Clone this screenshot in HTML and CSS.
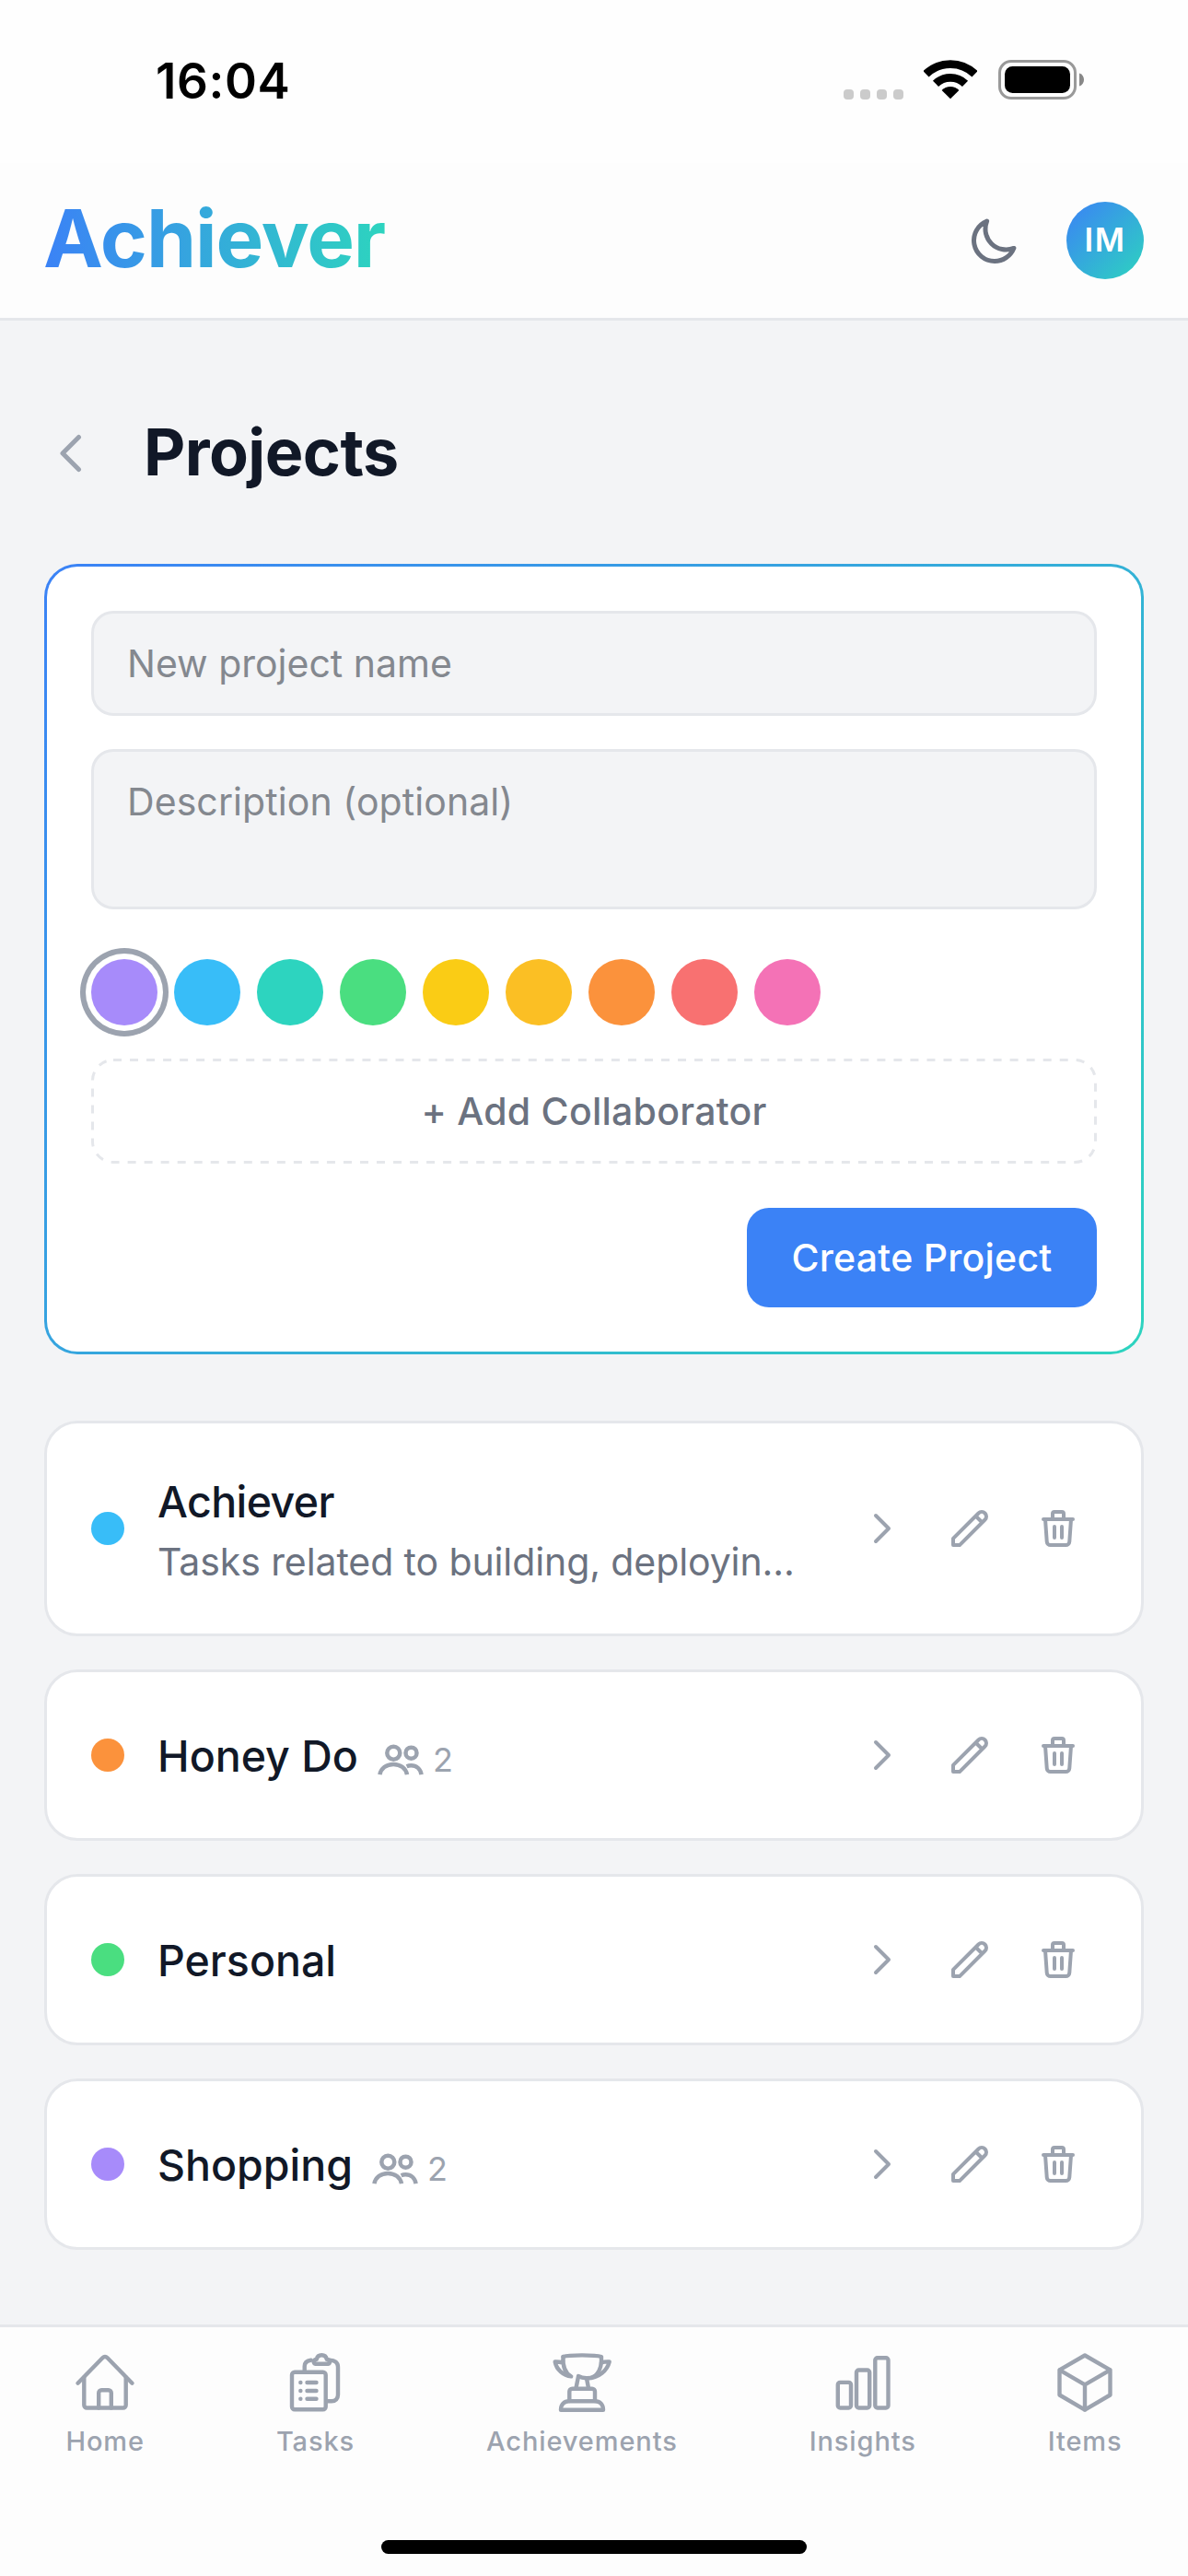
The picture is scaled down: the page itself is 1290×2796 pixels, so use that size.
FILE: index.html
```html
<!DOCTYPE html>
<html lang="en">
<head>
    <meta charset="UTF-8">
    <meta name="viewport" content="width=device-width, initial-scale=1.0">
    <title>Achiever - Projects</title>
    <link rel="stylesheet" href="styles.css">
</head>
<body>
    <!-- Shared icons -->
    <svg class="sprite" width="0" height="0">
        <symbol id="chevron" viewBox="0 0 24 24"><path d="M9 5l7 7-7 7"/></symbol>
        <symbol id="pencil" viewBox="0 0 24 24"><path d="M15.232 5.232l3.536 3.536m-2.036-5.036a2.5 2.5 0 113.536 3.536L6.5 21.036H3v-3.572L16.732 3.732z"/></symbol>
        <symbol id="trash" viewBox="0 0 24 24"><path d="M19 7l-.867 12.142A2 2 0 0116.138 21H7.862a2 2 0 01-1.995-1.858L5 7m5 4v6m4-6v6m1-10V4a1 1 0 00-1-1h-4a1 1 0 00-1 1v3M4 7h16"/></symbol>
        <symbol id="people" viewBox="0 0 50 36">
            <circle cx="17.3" cy="10.7" r="7"/>
            <circle cx="36.5" cy="10.7" r="6"/>
            <path d="M2.4 34.2C3.5 27.5 9.5 22.9 17.2 22.9s13.7 4.6 14.8 11.3"/>
            <path d="M31.6 25.2c1.4-.6 3-.9 4.8-.9 5.8 0 10.2 4 11.2 9.9"/>
        </symbol>
    </svg>

    <div class="status-bar">
        <span class="time">16:04</span>
        <div class="status-icons">
            <div class="signal"><i></i><i></i><i></i><i></i></div>
            <svg class="wifi" viewBox="0 0 58 43">
                <path d="M2.5 15.3a38 38 0 0 1 53 0M13 25.8a23 23 0 0 1 32 0" fill="none" stroke="#000" stroke-width="8.8"/>
                <path d="M29 42.3 19.6 32.9a13.3 13.3 0 0 1 18.8 0z"/>
            </svg>
            <svg class="battery" viewBox="0 0 93 43">
                <rect x="1.5" y="1.5" width="82" height="40" rx="12.5" fill="none" stroke="#999" stroke-width="3"/>
                <rect x="7" y="7" width="71" height="29" rx="8.5"/>
                <path d="M88 14.5c3.3 1 5 3.7 5 7s-1.7 6-5 7z" fill="#888"/>
            </svg>
        </div>
    </div>

    <header class="header">
        <div class="logo">Achiever</div>
        <div class="header-actions">
            <svg class="icon moon" viewBox="0 0 24 24"><path d="M20.354 15.354A9 9 0 018.646 3.646 9.003 9.003 0 0012 21a9.003 9.003 0 008.354-5.646z"/></svg>
            <div class="avatar">IM</div>
        </div>
    </header>

    <main class="main">
        <div class="page-title">
            <svg class="icon back" viewBox="0 0 24 24"><path d="M15 19l-7-7 7-7"/></svg>
            <h1>Projects</h1>
        </div>

        <form class="new-project">
            <input type="text" class="field" placeholder="New project name">
            <textarea class="field description" placeholder="Description (optional)"></textarea>
            <div class="swatches">
                <span class="swatch violet selected"></span>
                <span class="swatch sky"></span>
                <span class="swatch teal"></span>
                <span class="swatch green"></span>
                <span class="swatch yellow"></span>
                <span class="swatch amber"></span>
                <span class="swatch orange"></span>
                <span class="swatch red"></span>
                <span class="swatch pink"></span>
            </div>
            <button type="button" class="add-collaborator">
                <svg class="dashes" viewBox="0 0 1092 114"><rect x="1.5" y="1.5" width="1089" height="111" rx="22.5"/></svg>
                + Add Collaborator
            </button>
            <button type="button" class="create">Create Project</button>
        </form>

        <div class="projects">
            <div class="project">
                <span class="dot sky"></span>
                <div class="info">
                    <div class="name name-tight">Achiever</div>
                    <div class="details">Tasks related to building, deployin...</div>
                </div>
                <div class="actions">
                    <svg class="icon"><use href="#chevron"/></svg>
                    <svg class="icon"><use href="#pencil"/></svg>
                    <svg class="icon"><use href="#trash"/></svg>
                </div>
            </div>
            <div class="project">
                <span class="dot orange"></span>
                <div class="info">
                    <div class="name">Honey Do <span class="members"><svg class="people"><use href="#people"/></svg>2</span></div>
                </div>
                <div class="actions">
                    <svg class="icon"><use href="#chevron"/></svg>
                    <svg class="icon"><use href="#pencil"/></svg>
                    <svg class="icon"><use href="#trash"/></svg>
                </div>
            </div>
            <div class="project">
                <span class="dot green"></span>
                <div class="info">
                    <div class="name">Personal</div>
                </div>
                <div class="actions">
                    <svg class="icon"><use href="#chevron"/></svg>
                    <svg class="icon"><use href="#pencil"/></svg>
                    <svg class="icon"><use href="#trash"/></svg>
                </div>
            </div>
            <div class="project">
                <span class="dot violet"></span>
                <div class="info">
                    <div class="name">Shopping <span class="members"><svg class="people"><use href="#people"/></svg>2</span></div>
                </div>
                <div class="actions">
                    <svg class="icon"><use href="#chevron"/></svg>
                    <svg class="icon"><use href="#pencil"/></svg>
                    <svg class="icon"><use href="#trash"/></svg>
                </div>
            </div>
        </div>
    </main>

    <nav class="tabs">
        <div class="tab-row">
            <a class="tab">
                <svg viewBox="0 0 72 72">
                    <path d="M6.5 36.7 33.6 9a3.4 3.4 0 0 1 4.8 0L65.5 36.7"/>
                    <path d="M13.3 30.5v30a3 3 0 0 0 3 3h39.4a3 3 0 0 0 3-3v-30"/>
                    <path d="M29.2 63.5V47.3a3 3 0 0 1 3-3h7.6a3 3 0 0 1 3 3v16.2"/>
                </svg>
                Home
            </a>
            <a class="tab">
                <svg viewBox="0 0 72 72">
                    <rect x="11" y="24.7" width="36.7" height="40.6" rx="3"/>
                    <path d="M24.7 24V18.5c0-3.8 2.5-6.3 7-6.8M52 11.7c5.8 0 9 2.8 9 7.5v30.1c0 4.3-2.7 7-7 7h-5.5"/>
                    <path d="M36.5 15.7h13.8a2 2 0 0 0 1.8-2.4c-.4-1.6-1.7-2.4-3.3-2.6-.6-2.9-2.3-4.4-5.5-4.4s-4.9 1.5-5.5 4.4c-1.6.2-2.7 1-3.1 2.6a2 2 0 0 0 1.8 2.4z"/>
                    <path d="M20.3 36h.1M27.5 36h10M20.3 45h.1M27.5 45h10M20.3 53.7h.1M27.5 53.7h10"/>
                </svg>
                Tasks
            </a>
            <a class="tab">
                <svg viewBox="0 0 72 72">
                    <path d="M15.5 8C22 5.8 50 5.8 57 8c.6 9-1.3 14-4.5 18.3-3 4.1-6.9 5.3-11.8 5-3.5-.3-6-1-8.7-2.3"/>
                    <path d="M15.5 8c-.5 9.5 1.2 17.5 8.7 21.4-8.3-.9-16-7.4-17.5-15.9 3-.2 5.5.2 8.5 1"/>
                    <path d="M57 14.5c3-1 5.7-1.3 8.7-1C63.5 22.5 54.5 31.3 41.5 31.3"/>
                    <path d="M31.8 30.5 29.5 42M41 31.5 43 42"/>
                    <path d="M22.3 56V45.7a3 3 0 0 1 3-3H47a3 3 0 0 1 3 3V56"/>
                    <path d="M13 65.7h46c0-5.7-3.5-9.5-9-9.5H22c-5.5 0-9 3.8-9 9.5z"/>
                </svg>
                Achievements
            </a>
            <a class="tab">
                <svg viewBox="0 0 72 72">
                    <rect x="8.8" y="35.9" width="14.2" height="27.6" rx="2.5"/>
                    <rect x="29" y="22.5" width="14.2" height="41" rx="2.5"/>
                    <rect x="49.3" y="9.2" width="14.2" height="54.3" rx="2.5"/>
                </svg>
                Insights
            </a>
            <a class="tab">
                <svg viewBox="0 0 72 72">
                    <path d="M36 6.5 63.5 22.3V49.5L36 65.7 8.5 49.5V22.3zM8.5 22.3 36 38.3l27.5-16M36 38.3v27.4"/>
                </svg>
                Items
            </a>
        </div>
        <div class="home-indicator"></div>
    </nav>
</body>
</html>
```
FILE: styles.css
```css
* {
    margin: 0;
    padding: 0;
    box-sizing: border-box;
}

body {
    font-family: Inter, 'Liberation Sans', sans-serif;
    background: #f3f4f6;
    color: #111827;
    width: 1290px;
    height: 2796px;
    display: flex;
    flex-direction: column;
    overflow: hidden;
}

.sprite {
    position: absolute;
}

svg {
    display: block;
    flex-shrink: 0;
}

/* Status bar */
.status-bar {
    height: 177px;
    padding: 0 113px 4px 169px;
    background: #fefefe;
    display: flex;
    align-items: center;
    justify-content: space-between;
}

.time {
    font-size: 53px;
    font-weight: 600;
    line-height: 60px;
    letter-spacing: 0.6px;
    color: #000;
    padding-top: 3px;
}

.status-icons {
    display: flex;
    align-items: center;
}

.signal {
    display: flex;
    gap: 7px;
    margin: 31px 22px 0 0;
}

.signal i {
    width: 11px;
    height: 11px;
    border-radius: 4px;
    background: #cbcbcb;
}

.wifi {
    width: 58px;
    height: 43px;
    margin-right: 23px;
}

.battery {
    width: 93px;
    height: 43px;
}

/* Header */
.header {
    height: 171px;
    padding: 0 48px;
    background: #fdfdfd;
    border-bottom: 3px solid #e5e7eb;
    display: flex;
    align-items: center;
    justify-content: space-between;
}

.logo {
    font-size: 87px;
    font-weight: 660;
    line-height: 108px;
    letter-spacing: -1.1px;
    margin: 0 0 4px -1px;
    background: linear-gradient(90deg, #3b82f6, #2dd4bf);
    -webkit-background-clip: text;
    background-clip: text;
    color: transparent;
}

.header-actions {
    display: flex;
    align-items: center;
    gap: 48px;
}

.icon {
    width: 48px;
    height: 48px;
    fill: none;
    stroke: #9ca3af;
    stroke-width: 2;
    stroke-linecap: round;
    stroke-linejoin: round;
}

.moon {
    width: 60px;
    height: 60px;
    stroke: #6b7280;
}

.avatar {
    width: 84px;
    height: 84px;
    border-radius: 50%;
    background: linear-gradient(135deg, #3b82f6, #2dd4bf);
    color: #fff;
    font-size: 35px;
    font-weight: 600;
    letter-spacing: 1.4px;
    line-height: 82px;
    text-align: center;
}

/* Page content */
.main {
    flex: 1;
    padding: 114px 48px 0;
}

.page-title {
    height: 60px;
    margin-bottom: 90px;
    display: flex;
    align-items: center;
    gap: 48px;
}

.back {
    width: 60px;
    height: 60px;
}

h1 {
    font-size: 70px;
    font-weight: 700;
    letter-spacing: -0.58px;
    line-height: 84px;
    margin-bottom: 3px;
}

/* New project form */
.new-project {
    border: 3px solid transparent;
    border-radius: 36px;
    background: linear-gradient(#fff, #fff) padding-box, linear-gradient(135deg, #3b82f6, #2dd4bf) border-box;
    padding: 48px;
    display: flex;
    flex-direction: column;
    margin-bottom: 72px;
}

.field {
    width: 100%;
    height: 114px;
    padding: 24px 36px;
    border: 3px solid #e5e7eb;
    border-radius: 24px;
    background: #f3f4f6;
    font: 400 41px/60px Inter, sans-serif;
    margin-bottom: 36px;
    resize: none;
    overflow: hidden;
}

.field::placeholder {
    color: #84888f;
    opacity: 1;
}

.description {
    height: 174px;
    letter-spacing: 0.08px;
    margin-bottom: 54px;
}

.swatches {
    display: flex;
    gap: 18px;
    margin-bottom: 36px;
}

.swatch {
    width: 72px;
    height: 72px;
    border-radius: 50%;
}

.selected {
    box-shadow: 0 0 0 6px #fff, 0 0 0 12px #9ca3af;
}

.violet { background: #a78bfa; }
.sky { background: #38bdf8; }
.teal { background: #2dd4bf; }
.green { background: #4ade80; }
.yellow { background: #facc15; }
.amber { background: #fbbf24; }
.orange { background: #fb923c; }
.red { background: #f87171; }
.pink { background: #f472b6; }

button {
    border: none;
    font: 500 41px/60px Inter, sans-serif;
    letter-spacing: 0.25px;
}

.add-collaborator {
    position: relative;
    height: 114px;
    margin-bottom: 48px;
    background: none;
    color: #6b7280;
}

.dashes {
    position: absolute;
    inset: 0;
    fill: none;
    stroke: #e5e7eb;
    stroke-width: 3;
    stroke-dasharray: 9 9.03;
}

.create {
    align-self: flex-end;
    width: 380px;
    height: 108px;
    border-radius: 24px;
    background: #3b82f6;
    color: #fff;
}

/* Project list */
.projects {
    display: flex;
    flex-direction: column;
    gap: 36px;
}

.project {
    background: #fff;
    border: 3px solid #e5e7eb;
    border-radius: 36px;
    padding: 48px;
    display: flex;
    align-items: center;
}

.dot {
    width: 36px;
    height: 36px;
    border-radius: 50%;
    margin-right: 36px;
}

.info {
    flex: 1;
}

.name {
    display: flex;
    align-items: center;
    font-size: 46.5px;
    font-weight: 500;
    line-height: 74px;
    margin-bottom: -2px;
}

.name-tight {
    letter-spacing: -0.6px;
}

.members {
    display: flex;
    align-items: center;
    gap: 10px;
    margin: 8px 0 0 21px;
    font-size: 36px;
    font-weight: 400;
    line-height: 48px;
    color: #9ca3af;
}

.people {
    width: 50px;
    height: 36px;
    fill: none;
    stroke: #9ca3af;
    stroke-width: 4.5;
}

.details {
    font-size: 41px;
    line-height: 60px;
    letter-spacing: -0.1px;
    color: #6b7280;
    white-space: nowrap;
}

.actions {
    display: flex;
    gap: 12px;
}

.actions .icon {
    width: 84px;
    height: 84px;
    padding: 18px;
}

/* Bottom navigation */
.tabs {
    height: 273px;
    background: #fdfdfd;
    border-top: 3px solid #e5e7eb;
    display: flex;
    flex-direction: column;
    align-items: center;
    justify-content: space-between;
    padding: 24px 0;
}

.tab-row {
    width: 100%;
    display: flex;
    justify-content: space-around;
}

.tab {
    display: flex;
    flex-direction: column;
    align-items: center;
    gap: 6px;
    font-size: 29px;
    font-weight: 450;
    line-height: 44px;
    letter-spacing: 0.9px;
    color: #9ca3af;
}

.tab svg {
    width: 72px;
    height: 72px;
    fill: none;
    stroke: #9ca3af;
    stroke-width: 4.4;
    stroke-linecap: round;
    stroke-linejoin: round;
}

.home-indicator {
    width: 462px;
    height: 15px;
    border-radius: 8px;
    background: #000;
}
```
